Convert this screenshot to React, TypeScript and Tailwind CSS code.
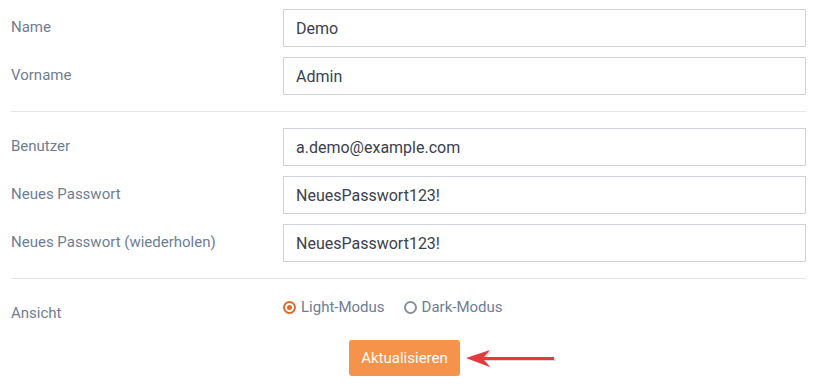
import React, { useState } from 'react';

const Field = ({ label, value }: { label: string; value: string }) => (
  <div className="flex items-center">
    <label className="-mt-[2px] w-[272px] shrink-0 text-[15px] text-[#6f7d93]">{label}</label>
    <input
      className="h-[38px] flex-1 border border-[#cfd4da] bg-white px-3 text-[16px] text-[#3a414d] outline-none"
      defaultValue={value}
    />
  </div>
);

const Radio = ({ checked, label, onClick }: { checked: boolean; label: string; onClick: () => void }) => (
  <button className="flex items-center gap-[5px] text-[15px] text-[#6f7d93]" onClick={onClick}>
    <span
      className={`flex h-[13px] w-[13px] items-center justify-center rounded-full border-2 ${
        checked ? 'border-[#e0692a]' : 'border-[#8a8f99]'
      }`}
    >
      {checked && <span className="h-[5px] w-[5px] rounded-full bg-[#e0692a]" />}
    </span>
    {label}
  </button>
);

export default function App() {
  const [mode, setMode] = useState('light');

  return (
    <div className="h-[384px] w-[822px] bg-white pl-[11px] pr-[16px] pt-[9px] font-['Roboto',sans-serif]">
      <div className="flex flex-col gap-[10px]">
        <Field label="Name" value="Demo" />
        <Field label="Vorname" value="Admin" />
      </div>

      <div className="my-[16px] h-px bg-[#e3e5e8]" />

      <div className="flex flex-col gap-[10px]">
        <Field label="Benutzer" value="a.demo@example.com" />
        <Field label="Neues Passwort" value="NeuesPasswort123!" />
        <Field label="Neues Passwort (wiederholen)" value="NeuesPasswort123!" />
      </div>

      <div className="mb-[16px] mt-[16px] h-px bg-[#e3e5e8]" />

      <div className="flex items-start pt-[2px]">
        <span className="mt-[6px] w-[272px] shrink-0 text-[15px] leading-5 text-[#6f7d93]">Ansicht</span>
        <div className="flex h-5 items-center gap-[19px]">
          <Radio checked={mode === 'light'} label="Light-Modus" onClick={() => setMode('light')} />
          <Radio checked={mode === 'dark'} label="Dark-Modus" onClick={() => setMode('dark')} />
        </div>
      </div>

      <div className="mt-[17px] flex justify-center pr-[8px]">
        <div className="relative">
          <button className="h-[36px] rounded-[3px] bg-[#f5934b] px-[12px] text-[15px] text-white">
            Aktualisieren
          </button>
          <svg
            className="absolute left-[116px] top-[9px]"
            width="92"
            height="20"
            viewBox="0 0 92 20"
          >
            <path d="M2 9 L26 1 L20 8 L90 8 L90 11 L20 11 L26 18 Z" fill="#9a9a9a" opacity="0.35" transform="translate(1 1)" />
            <path d="M1 9 L25 1 L19 8 L89 8 L89 11 L19 11 L25 18 Z" fill="#e8383d" />
          </svg>
        </div>
      </div>
    </div>
  );
}
